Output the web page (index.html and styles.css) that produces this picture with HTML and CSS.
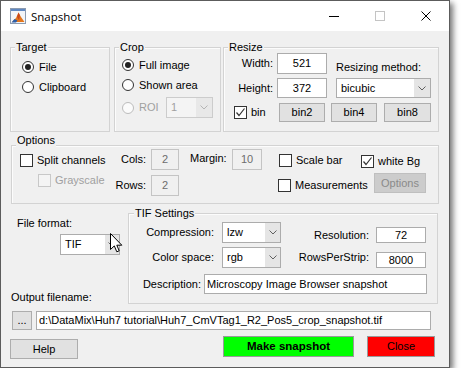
FILE: index.html
```html
<!DOCTYPE html>
<html>
<head>
<meta charset="utf-8">
<title>Snapshot</title>
<link rel="stylesheet" href="styles.css">
</head>
<body>
<div class="window">
  <div class="titlebar">
    <svg class="appicon" viewBox="0 0 16 16" width="16" height="16">
      <rect x="0.5" y="0.5" width="15" height="15" fill="#f3f5f8" stroke="#8c9bb0"/>
      <rect x="1" y="1" width="14" height="2" fill="#5f88c2"/>
      <polygon points="2,14 6,10 8.5,4.5 11,9 14.5,14" fill="#e4761c"/>
      <polygon points="8.5,4.5 10,7.5 9,12 7,9" fill="#c9471a"/>
      <polygon points="1.5,14.5 4.5,11 7.5,12.5 6,14.5" fill="#2d5fa9"/>
    </svg>
    <span class="title">Snapshot</span>
    <div class="winctrls">
      <div class="wc"><span class="wc-min"></span></div>
      <div class="wc"><span class="wc-max"></span></div>
      <div class="wc"><svg width="10" height="10" viewBox="0 0 10 10"><path d="M0.5 0.5L9.5 9.5M9.5 0.5L0.5 9.5" stroke="#000" stroke-width="1" fill="none"/></svg></div>
    </div>
  </div>

  <div class="client">
    <div class="toprow">
      <div class="group g-target">
        <div class="gtitle">Target</div>
        <div class="gbody target-body">
          <div class="opt"><span class="radio on"></span>File</div>
          <div class="opt"><span class="radio"></span>Clipboard</div>
        </div>
      </div>

      <div class="group g-crop">
        <div class="gtitle">Crop</div>
        <div class="gbody crop-body">
          <div class="opt"><span class="radio on"></span>Full image</div>
          <div class="opt"><span class="radio"></span>Shown area</div>
          <div class="opt roi-row">
            <span class="roi-label"><span class="radio disabled"></span><span class="dis">ROI</span></span>
            <div class="select disabled sel-roi"><span class="val">1</span><span class="arr"><svg width="8" height="5" viewBox="0 0 8 5"><path d="M0.5 0.5L4 4L7.5 0.5" stroke="#b4b4b4" fill="none"/></svg></span></div>
          </div>
        </div>
      </div>

      <div class="group g-resize">
        <div class="gtitle">Resize</div>
        <div class="gbody resize-body">
          <div class="rrow r1">
            <span class="rlabel">Width:</span>
            <span class="edit e-size">521</span>
            <span class="method-label">Resizing method:</span>
          </div>
          <div class="rrow r2">
            <span class="rlabel">Height:</span>
            <span class="edit e-size">372</span>
            <div class="select sel-method"><span class="val">bicubic</span><span class="arr"><svg width="8" height="5" viewBox="0 0 8 5"><path d="M0.5 0.5L4 4L7.5 0.5" stroke="#606060" fill="none"/></svg></span></div>
          </div>
          <div class="rrow r3">
            <span class="cbopt bin-opt"><span class="cb"><svg width="11" height="11" viewBox="0 0 11 11"><path d="M1.5 5.5L4 8.5L9.5 1.5" stroke="#333" stroke-width="1.2" fill="none"/></svg></span>bin</span>
            <button class="btn b-bin2">bin2</button>
            <button class="btn b-bin4">bin4</button>
            <button class="btn b-bin8">bin8</button>
          </div>
        </div>
      </div>
    </div>

    <div class="group g-options">
      <div class="gtitle">Options</div>
      <div class="gbody opt-body">
        <div class="ocol col-a">
          <div class="cbopt split"><span class="cb"></span>Split channels</div>
          <div class="cbopt gray"><span class="cb disabled"></span><span class="dis">Grayscale</span></div>
        </div>
        <div class="ocol col-b">
          <div class="orow"><span class="olabel">Cols:</span><span class="edit disabled e-cols">2</span></div>
          <div class="orow rows"><span class="olabel">Rows:</span><span class="edit disabled e-cols">2</span></div>
        </div>
        <div class="ocol col-c">
          <div class="orow"><span class="mlabel">Margin:</span><span class="edit disabled e-margin">10</span></div>
        </div>
        <div class="ocol col-d">
          <div class="cbopt scalebar"><span class="cb"></span>Scale bar</div>
          <div class="cbopt meas"><span class="cb"></span>Measurements</div>
        </div>
        <div class="ocol col-e">
          <div class="cbopt whitebg"><span class="cb"><svg width="11" height="11" viewBox="0 0 11 11"><path d="M1.5 5.5L4 8.5L9.5 1.5" stroke="#333" stroke-width="1.2" fill="none"/></svg></span>white Bg</div>
          <button class="btn disabled b-opts">Options</button>
        </div>
      </div>
    </div>

    <div class="midrow">
      <div class="leftcol">
        <div class="ff-label">File format:</div>
        <div class="select sel-ff"><span class="val">TIF</span><span class="arr"><svg width="8" height="5" viewBox="0 0 8 5"><path d="M0.5 0.5L4 4L7.5 0.5" stroke="#606060" fill="none"/></svg></span></div>
        <div class="of-label">Output filename:</div>
      </div>
      <div class="group g-tif">
        <div class="gtitle">TIF Settings</div>
        <div class="gbody tif-body">
          <div class="tif-top">
            <div class="tif-left">
              <div class="trow"><span class="tlabel">Compression:</span><div class="select sel-tif"><span class="val">lzw</span><span class="arr"><svg width="8" height="5" viewBox="0 0 8 5"><path d="M0.5 0.5L4 4L7.5 0.5" stroke="#606060" fill="none"/></svg></span></div></div>
              <div class="trow"><span class="tlabel">Color space:</span><div class="select sel-tif"><span class="val">rgb</span><span class="arr"><svg width="8" height="5" viewBox="0 0 8 5"><path d="M0.5 0.5L4 4L7.5 0.5" stroke="#606060" fill="none"/></svg></span></div></div>
            </div>
            <div class="tif-right">
              <div class="trow2 res"><span class="t2label">Resolution:</span><span class="edit e-res">72</span></div>
              <div class="trow2 rps"><span class="t2label">RowsPerStrip:</span><span class="edit e-res">8000</span></div>
            </div>
          </div>
          <div class="desc-row"><span class="dlabel">Description:</span><span class="edit e-desc">Microscopy Image Browser snapshot</span></div>
        </div>
      </div>
    </div>

    <div class="pathrow">
      <button class="btn b-dots">...</button>
      <span class="edit e-path">d:\DataMix\Huh7 tutorial\Huh7_CmVTag1_R2_Pos5_crop_snapshot.tif</span>
    </div>

    <div class="btnrow">
      <button class="btn b-help">Help</button>
      <button class="btn b-make">Make snapshot</button>
      <button class="btn b-close">Close</button>
    </div>
  </div>

  <svg class="cursor" width="13" height="21" viewBox="0 0 13 21">
    <path d="M0.5 0.5L0.5 16.5L4.3 12.9L6.8 18.8L9.2 17.8L6.8 12.2L11.8 12.2Z" fill="#fff" stroke="#000" stroke-width="1" stroke-linejoin="miter"/>
  </svg>
</div>
</body>
</html>
```

FILE: styles.css
```css
* { box-sizing: border-box; }
html, body { margin: 0; padding: 0; background: #fff; }
body {
  font-family: "Liberation Sans", Arial, sans-serif;
  font-size: 11px;
  color: #000;
}
.window {
  position: relative;
  width: 450px;
  height: 368px;
  border: 1px solid #5c5c5c;
  background: #f0f0f0;
  box-shadow: 3px 3px 6px rgba(0,0,0,0.55);
}
.titlebar {
  height: 30px;
  background: #fff;
  display: flex;
  align-items: center;
}
.appicon { margin-left: 9px; flex: none; }
.title {
  margin-left: 5px;
  font-family: "Open Sans", "Noto Sans", sans-serif;
  font-size: 11.5px;
  color: #000;
}
.winctrls { margin-left: auto; display: flex; height: 100%; }
.wc { width: 46px; display: flex; align-items: center; justify-content: center; }
.wc-min { width: 10px; height: 1px; background: #000; }
.wc-max { width: 10px; height: 10px; border: 1px solid #c4c4c4; }

.client {
  height: 336px;
  padding: 16px 0 0 9px;
  line-height: 13px;
}
.group {
  border: 1px solid #d3d3d3;
  box-shadow: inset 1px 1px 0 #fcfcfc;
}
.gtitle {
  display: table;
  margin: -7px 0 0 4px;
  padding: 0 1px;
  height: 13px;
  line-height: 13px;
  background: #f0f0f0;
}
.dis { color: #a0a0a0; }

.toprow { display: flex; height: 85px; }
.g-target { width: 100px; }
.g-crop { width: 107px; margin-left: 4px; }
.g-resize { width: 216px; margin-left: 2px; }

.opt { display: flex; align-items: center; height: 20px; }
.radio {
  width: 12px; height: 12px; border-radius: 50%;
  border: 1px solid #333; background: #fff;
  margin-right: 5px;
  display: flex; align-items: center; justify-content: center;
  flex: none;
}
.radio.on::after {
  content: ""; width: 6px; height: 6px; border-radius: 50%; background: #222;
}
.radio.disabled { border-color: #bcbcbc; background: #fbfbfb; }

.target-body { padding: 3px 0 0 11px; }
.crop-body { padding: 1px 0 0 7px; }
.roi-row { margin-top: 2px; height: 21px; }
.roi-label { display: flex; align-items: center; width: 44px; }

.select {
  display: flex;
  border: 1px solid #acacac;
  background: #fff;
}
.select .val { flex: 1; display: flex; align-items: center; padding-left: 4px; }
.select .arr {
  width: 16px; background: #e5e5e5;
  display: flex; align-items: center; justify-content: center;
}
.select.disabled { border-color: #cccccc; background: #f4f4f4; color: #a0a0a0; }
.select.disabled .arr { background: #e8e8e8; }
.sel-roi { width: 47px; height: 21px; }

.edit {
  display: flex; align-items: center; justify-content: center;
  background: #fff; border: 1px solid #acacac;
}
.edit.disabled { background: #f0f0f0; border-color: #c4c4c4; color: #6d6d6d; }

.resize-body { margin-top: -1px; }
.rrow { display: flex; }
.r1 { height: 21px; }
.r2 { height: 20px; margin-top: 4px; }
.r3 { height: 19px; margin-top: 5px; }
.rlabel { width: 49px; text-align: right; align-self: center; }
.e-size { width: 50px; margin-left: 4px; }
.method-label { margin-left: 9px; align-self: flex-end; }
.sel-method { width: 95px; margin-left: 9px; }

.cbopt { display: flex; align-items: center; height: 14px; }
.cb {
  width: 13px; height: 13px; border: 1px solid #333; background: #fff;
  margin-right: 4px; flex: none;
  display: flex; align-items: center; justify-content: center;
}
.cb svg { display: block; }
.cb.disabled { border-color: #c8c8c8; background: #f4f4f4; }
.bin-opt { width: 45px; margin-left: 10px; align-self: center; }

.btn {
  font: inherit;
  line-height: 13px;
  color: #000;
  background: #e1e1e1;
  border: 1px solid #adadad;
  padding: 0;
  margin: 0;
}
.btn.disabled { background: #cccccc; border-color: #bfbfbf; color: #8a8a8a; }
.b-bin2 { width: 46px; }
.b-bin4 { width: 46px; margin-left: 6px; }
.b-bin8 { width: 47px; margin-left: 7px; }

.g-options { width: 428px; height: 59px; margin: 13px 0 0 1px; }
.g-options .gtitle { margin-top: -12px; }
.opt-body { display: flex; margin-top: 1px; padding-left: 8px; }
.ocol { display: flex; flex-direction: column; }
.col-a { width: 95px; }
.split { margin-top: 5px; }
.gray { margin-top: 6px; margin-left: 18px; }
.col-b { width: 64px; }
.orow { display: flex; height: 21px; margin-top: 1px; }
.orow.rows { margin-top: 5px; }
.olabel { width: 31px; text-align: right; align-self: center; }
.e-cols { width: 28px; margin-left: 5px; }
.col-c { width: 72px; margin-left: 11px; }
.mlabel { width: 42px; align-self: center; margin-top: -2px; }
.e-margin { width: 30px; }
.col-d { width: 83px; margin-left: 16px; }
.scalebar { margin-top: 5px; margin-left: 1px; }
.meas { margin-top: 11px; }
.whitebg { margin-top: 6px; }
.b-opts { width: 52px; height: 20px; margin: 5px 0 0 13px; }

.midrow { display: flex; height: 91px; margin-top: 9px; }
.leftcol { width: 118px; display: flex; flex-direction: column; }
.ff-label { margin: 4px 0 0 7px; }
.sel-ff { width: 60px; height: 21px; margin: 4px 0 0 50px; }
.sel-ff .arr { width: 14px; }
.of-label { margin: 36px 0 0 1px; }

.g-tif { width: 310px; }
.g-tif .gtitle { margin-left: 5px; }
.tif-body { padding-top: 2px; }
.tif-top { display: flex; }
.tif-left { width: 152px; display: flex; flex-direction: column; }
.trow { display: flex; height: 21px; }
.trow + .trow { margin-top: 4px; }
.tlabel { width: 85px; text-align: right; align-self: center; }
.sel-tif { width: 59px; margin-left: 8px; }
.sel-tif .arr { width: 15px; }
.tif-right { display: flex; flex-direction: column; }
.trow2 { display: flex; height: 16px; }
.trow2.res { margin-top: 5px; }
.trow2.rps { margin-top: 9px; }
.t2label { width: 88px; text-align: right; align-self: center; }
.trow2.rps .t2label { margin-top: -5px; }
.e-res { width: 50px; margin-left: 7px; }
.desc-row { display: flex; height: 20px; margin-top: 6px; }
.dlabel { width: 72px; text-align: right; align-self: center; }
.e-desc { width: 223px; margin-left: 3px; justify-content: flex-start; padding-left: 2px; }

.pathrow { display: flex; height: 19px; margin-top: 7px; }
.b-dots { width: 20px; margin-left: 2px; }
.e-path { width: 395px; margin-left: 4px; justify-content: flex-start; padding-left: 2px; }

.btnrow { display: flex; align-items: flex-start; margin-top: 6px; }
.b-help { width: 68px; height: 20px; margin-top: 3px; }
.b-make {
  width: 131px; height: 21px; margin-left: 145px;
  background: #00ff00; border-color: #9a9a9a;
  font-weight: bold; font-size: 11.5px;
}
.b-close {
  width: 68px; height: 21px; margin-left: 13px;
  background: #ff0000; border-color: #9a9a9a;
}

.cursor { position: absolute; left: 109px; top: 232px; }
```
